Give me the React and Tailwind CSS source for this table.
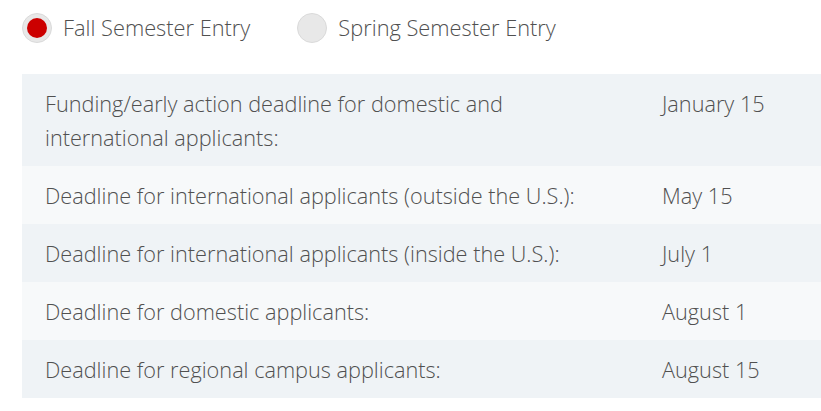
export default function App() {
  const rows = [
    {
      label: "Funding/early action deadline for domestic and international applicants:",
      date: "January 15",
    },
    {
      label: "Deadline for international applicants (outside the U.S.):",
      date: "May 15",
    },
    {
      label: "Deadline for international applicants (inside the U.S.):",
      date: "July 1",
    },
    { label: "Deadline for domestic applicants:", date: "August 1" },
    { label: "Deadline for regional campus applicants:", date: "August 15" },
  ];

  return (
    <div
      className="w-[821px] h-[411px] bg-white overflow-hidden text-[#505050] font-light"
      style={{ fontFamily: '"Open Sans", sans-serif' }}
    >
      <div className="flex items-center h-[56px] pl-[22px]">
        <label className="flex items-center gap-[11px]">
          <span className="w-[30px] h-[30px] rounded-full bg-[#e8e8e8] border border-[#dadada] flex items-center justify-center">
            <span className="w-[20px] h-[20px] rounded-full bg-[#cc0000]" />
          </span>
          <span className="text-[21.8px] leading-none">Fall Semester Entry</span>
        </label>
        <label className="flex items-center gap-[11px] ml-[47px]">
          <span className="w-[30px] h-[30px] rounded-full bg-[#e8e8e8] border border-[#dadada]" />
          <span className="text-[21.8px] leading-none">Spring Semester Entry</span>
        </label>
      </div>

      <div className="mt-[18px] ml-[22px]">
        {rows.map((row, i) => (
          <div
            key={i}
            className={`grid grid-cols-[617px_1fr] pl-[23px] pt-[13px] pb-[11px] text-[21.7px] leading-[34px] ${
              i % 2 === 0 ? "bg-[#eff3f6]" : "bg-[#f7f9fa]"
            }`}
          >
            <div className="pr-[40px]">{row.label}</div>
            <div>{row.date}</div>
          </div>
        ))}
      </div>
    </div>
  );
}
